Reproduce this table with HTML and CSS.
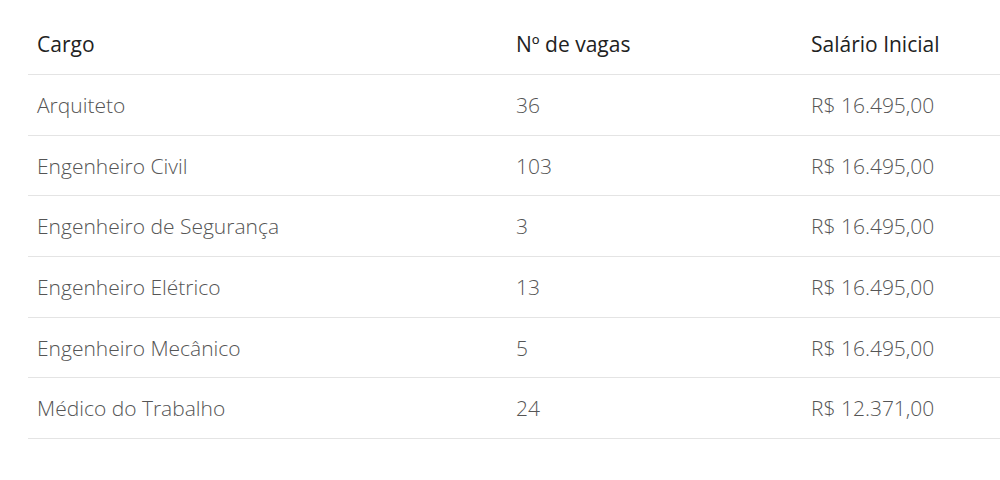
FILE: index.html
```html
<!DOCTYPE html>
<html lang="pt">
<head>
<meta charset="utf-8">
<link rel="stylesheet" href="styles.css">
</head>
<body>
<div class="wrap">
<table class="vagas">
<thead>
<tr><th class="c1">Cargo</th><th class="c2">Nº de vagas</th><th class="c3">Salário Inicial</th></tr>
</thead>
<tbody>
<tr><td>Arquiteto</td><td>36</td><td>R$ 16.495,00</td></tr>
<tr><td>Engenheiro Civil</td><td>103</td><td>R$ 16.495,00</td></tr>
<tr><td>Engenheiro de Segurança</td><td>3</td><td>R$ 16.495,00</td></tr>
<tr><td>Engenheiro Elétrico</td><td>13</td><td>R$ 16.495,00</td></tr>
<tr><td>Engenheiro Mecânico</td><td>5</td><td>R$ 16.495,00</td></tr>
<tr><td>Médico do Trabalho</td><td>24</td><td>R$ 12.371,00</td></tr>
</tbody>
</table>
</div>
</body>
</html>
```

FILE: styles.css
```css
html, body {
  margin: 0;
  padding: 0;
  background: #ffffff;
}
body {
  font-family: "Open Sans", "Liberation Sans", sans-serif;
  overflow: hidden;
}
.wrap {
  padding: 14px 0 0 28px;
}
.vagas {
  border-collapse: collapse;
  width: 972px;
  table-layout: fixed;
}
.vagas th,
.vagas td {
  padding: 0 9px;
  text-align: left;
  vertical-align: middle;
  font-size: 21px;
  line-height: 28px;
  border-bottom: 1px solid #e4e4e4;
  white-space: nowrap;
}
.vagas th {
  height: 60px;
  font-weight: 500;
  color: #222222;
}
.vagas td {
  height: 59.7px;
  font-weight: 300;
  color: #555555;
}
.c1 { width: 461px; }
.c2 { width: 277px; }
```
